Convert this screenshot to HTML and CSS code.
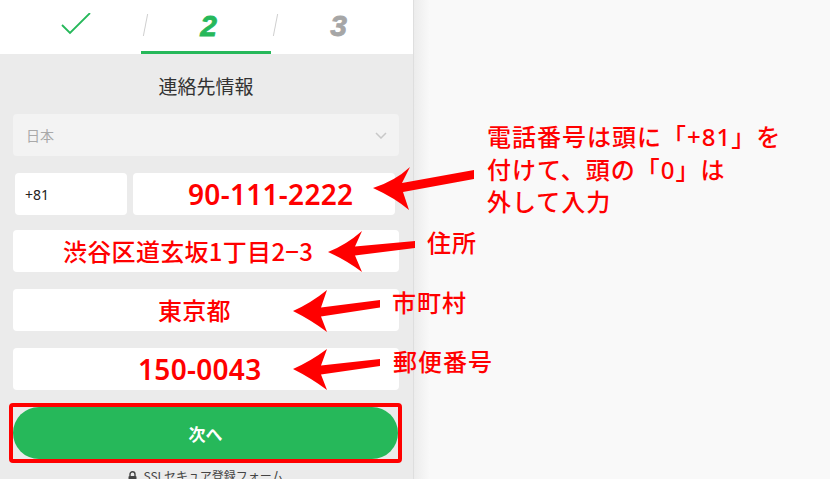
FILE: index.html
```html
<!DOCTYPE html>
<html lang="ja">
<head>
<meta charset="utf-8">
<title>連絡先情報</title>
<link rel="stylesheet" href="styles.css">
</head>
<body>
<div class="page">
  <main class="panel">
    <header class="steps">
      <div class="step">
        <svg class="check" width="32" height="24" viewBox="0 0 32 24"><polyline points="2,12 10,20 30,0" fill="none" stroke="#26b85a" stroke-width="1.8"/></svg>
      </div>
      <div class="step step-current has-sep"><span class="step-num">2</span></div>
      <div class="step step-next has-sep"><span class="step-num">3</span></div>
    </header>
    <div class="form">
      <h1 class="form-title">連絡先情報</h1>
      <div class="select">
        <span>日本</span>
        <svg width="12" height="7" viewBox="0 0 12 7"><polyline points="1,1 6,6 11,1" fill="none" stroke="#c8c8c8" stroke-width="1.5"/></svg>
      </div>
      <div class="phone-row">
        <div class="field field-code">+81</div>
        <div class="field field-phone"><span class="value value-num">90-111-2222</span></div>
      </div>
      <div class="field field-address"><span class="value value-cjk">渋谷区道玄坂1丁目2−3</span></div>
      <div class="field field-city"><span class="value value-cjk">東京都</span></div>
      <div class="field field-postal"><span class="value value-num">150-0043</span></div>
      <div class="btn-mark"><button class="btn-next" type="button">次へ</button></div>
      <p class="secure"><svg width="9" height="11" viewBox="0 0 9 11"><path d="M2 5V3.3a2.5 2.5 0 0 1 5 0V5" fill="none" stroke="#444" stroke-width="1.4"/><rect x="0.5" y="5" width="8" height="6" rx="1" fill="#444"/></svg>SSLセキュア登録フォーム</p>
    </div>
  </main>
  <aside class="side"></aside>

  <p class="note note-phone">電話番号は頭に「+81」を<br>付けて、頭の「0」は<br>外して入力</p>
  <p class="note note-address">住所</p>
  <p class="note note-city">市町村</p>
  <p class="note note-postal">郵便番号</p>

  <svg class="arrows" width="830" height="479" viewBox="0 0 830 479">
    <path d="M373 188 Q395 181 410 167 L402 183 L474 170 L474 179 L403 192 L409 210 Q395 198 373 188 Z" fill="#ff0000"/>
    <path d="M328 252 Q346 245 362 231 L355 246.5 L415 241 L415 248 L355 255.5 L362 272 Q346 260 328 252 Z" fill="#ff0000"/>
    <path d="M293 311 Q311 303 327 290 L321 307.5 L380 300 L380 307.5 L321 316.5 L327 332 Q311 320 293 311 Z" fill="#ff0000"/>
    <path d="M293 369 Q311 361 327 349 L321 365.5 L380 359 L380 366 L321 374.5 L327 390 Q311 378 293 369 Z" fill="#ff0000"/>
  </svg>
</div>
</body>
</html>
```
FILE: styles.css
```css
html, body {
  margin: 0;
  padding: 0;
}
body {
  background: #f9f9f9;
  font-family: "Noto Sans", "Noto Sans CJK JP", sans-serif;
}
.page {
  position: relative;
  display: flex;
  width: 830px;
  height: 479px;
  overflow: hidden;
}
.panel {
  width: 413px;
  flex: none;
  background: #ebebeb;
  border-right: 1px solid #dedede;
}
.steps {
  display: flex;
  height: 54px;
  box-sizing: border-box;
  padding: 0 12px 0 11px;
  background: #fff;
}
.step {
  position: relative;
  width: 130px;
  display: flex;
  align-items: center;
  justify-content: center;
  border-bottom: 3px solid transparent;
}
.step-current {
  border-bottom-color: #26b85a;
}
.has-sep::before {
  content: "";
  position: absolute;
  left: 3.5px;
  top: 14px;
  width: 1px;
  height: 22px;
  background: #cfcfcf;
  transform: skewX(-11deg);
}
.check {
  margin-left: -1px;
  margin-top: -1px;
}
.step-num {
  font-family: "Liberation Sans", Arial, sans-serif;
  font-weight: 700;
  font-style: italic;
  font-size: 30px;
  line-height: 1;
  margin-left: 5px;
  -webkit-text-stroke: 0.8px currentColor;
}
.step-current .step-num {
  color: #26b85a;
}
.step-next .step-num {
  color: #a6a6a6;
}
.form {
  padding: 0 14px 0 13px;
}
.form-title {
  margin: 0;
  height: 60px;
  display: flex;
  align-items: center;
  justify-content: center;
  font-family: "Noto Sans CJK JP", sans-serif;
  font-weight: 400;
  font-size: 19px;
  color: #333;
  padding-top: 3px;
  box-sizing: border-box;
}
.select {
  height: 42px;
  background: #f3f3f3;
  border-radius: 4px;
  display: flex;
  align-items: center;
  justify-content: space-between;
  padding: 0 12px 0 13px;
  font-family: "Noto Sans CJK JP", sans-serif;
  font-size: 14px;
  color: #a9a9a9;
}
.phone-row {
  display: flex;
  gap: 6px;
  margin-top: 17px;
  padding: 0 4px 0 2px;
}
.field {
  height: 42px;
  background: #fff;
  border-radius: 4px;
  display: flex;
  align-items: center;
  box-sizing: border-box;
}
.field-code {
  width: 112px;
  flex: none;
  padding-left: 10px;
  font-size: 14px;
  color: #222;
}
.field-phone {
  flex: 1;
  padding-left: 55px;
}
.field-address {
  margin-top: 15px;
  padding-left: 50px;
}
.field-city {
  margin-top: 17px;
  padding-left: 145px;
}
.field-postal {
  margin-top: 17px;
  padding-left: 125px;
}
.value {
  color: #ff0000;
  font-size: 24px;
  line-height: 1;
}
.value-cjk {
  font-family: "Noto Sans CJK JP", sans-serif;
  font-weight: 500;
  letter-spacing: 0.3px;
}
.value-num {
  font-weight: 600;
  font-size: 28px;
  letter-spacing: 0.3px;
}
.btn-mark {
  margin: 13px -3px 0 -4px;
  border: 4px solid #ff0000;
  border-radius: 4px;
}
.btn-next {
  display: block;
  width: 100%;
  height: 52px;
  border: none;
  border-radius: 26px;
  background: #26b85a;
  color: #fff;
  font-family: "Noto Sans CJK JP", sans-serif;
  font-weight: 700;
  font-size: 17px;
  padding: 0;
}
.secure {
  margin: 5px 0 0;
  text-align: center;
  font-family: "Noto Sans CJK JP", sans-serif;
  font-size: 12px;
  line-height: 16px;
  color: #444;
}
.secure svg {
  margin-right: 6px;
  vertical-align: -1px;
}
.side {
  flex: 1;
  background: linear-gradient(to right, #ececec 0, #f9f9f9 16px);
}
.note {
  position: absolute;
  margin: 0;
  color: #ff0000;
  font-weight: 500;
  font-size: 24px;
  line-height: 32.5px;
  letter-spacing: 1px;
  white-space: nowrap;
}
.note-phone {
  left: 487px;
  top: 121px;
}
.note-address {
  left: 427px;
  top: 227px;
}
.note-city {
  left: 392px;
  top: 287px;
}
.note-postal {
  left: 393px;
  top: 346px;
}
.arrows {
  position: absolute;
  left: 0;
  top: 0;
  pointer-events: none;
}
```
